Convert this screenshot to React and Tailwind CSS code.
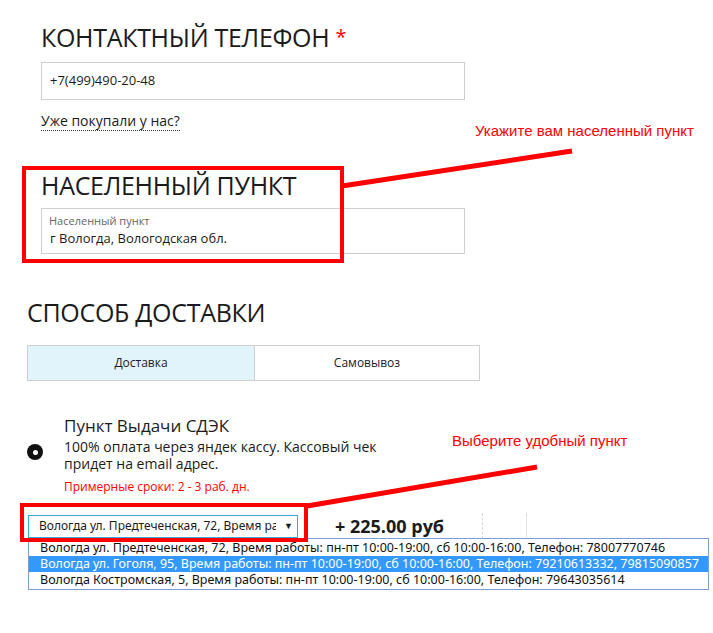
export default function App() {
  const options = [
    "Вологда ул. Предтеченская, 72, Время работы: пн-пт 10:00-19:00, сб 10:00-16:00, Телефон: 78007770746",
    "Вологда ул. Гоголя, 95, Время работы: пн-пт 10:00-19:00, сб 10:00-16:00, Телефон: 79210613332, 79815090857",
    "Вологда Костромская, 5, Время работы: пн-пт 10:00-19:00, сб 10:00-16:00, Телефон: 79643035614",
  ];

  return (
    <div className="relative w-[713px] h-[633px] bg-white overflow-hidden text-[#1b1b1b] font-['Open_Sans',sans-serif]">
      {/* Контактный телефон */}
      <div className="pl-[41px] pt-[21px]">
        <h2 className="text-[25px] leading-[32px] tracking-[-0.3px]">
          КОНТАКТНЫЙ ТЕЛЕФОН <span className="text-[20px] text-[#ff0000] align-top">*</span>
        </h2>
        <div className="mt-[9px] w-[424px] h-[38px] border border-[#cfcfcf] flex items-center px-[8px] text-[13px]">
          +7(499)490-20-48
        </div>
        <div className="mt-[8px]">
          <span className="text-[14px] leading-[20px] border-b border-dotted border-[#333]">Уже покупали у нас?</span>
        </div>
      </div>

      {/* Населенный пункт */}
      <div className="pl-[41px] pt-[37px]">
        <h2 className="text-[25px] leading-[32px] tracking-[-0.3px]">НАСЕЛЕННЫЙ ПУНКТ</h2>
        <div className="mt-[7px] w-[424px] h-[46px] border border-[#cfcfcf] px-[7px] pt-[5px]">
          <div className="text-[11px] leading-[14px] text-[#666]">Населенный пункт</div>
          <div className="text-[13px] leading-[20px] pl-[1px]">г Вологда, Вологодская обл.</div>
        </div>
      </div>

      {/* Способ доставки */}
      <div className="pl-[27px] pt-[42px]">
        <h2 className="text-[25px] leading-[32px] tracking-[-0.3px]">СПОСОБ ДОСТАВКИ</h2>
        <div className="mt-[17px] w-[453px] h-[36px] border border-[#cfcfcf] flex text-[12px]">
          <div className="w-[227px] bg-[#e2f4fb] border-r border-[#cfcfcf] flex items-center justify-center">Доставка</div>
          <div className="flex-1 flex items-center justify-center">Самовывоз</div>
        </div>

        <div className="mt-[34px] flex">
          <div className="w-[37px] pt-[29px]">
            <div className="w-[16px] h-[16px] rounded-full bg-[#111] flex items-center justify-center">
              <div className="w-[5px] h-[5px] rounded-full bg-white" />
            </div>
          </div>
          <div>
            <div className="text-[17px] leading-[22px]">Пункт Выдачи СДЭК</div>
            <div className="text-[14px] leading-[17px] w-[330px] mt-[1px]">100% оплата через яндек кассу. Кассовый чек придет на email адрес.</div>
            <div className="text-[12px] leading-[16px] text-[#ff0000] mt-[7px]">Примерные сроки: 2 - 3 раб. дн.</div>
          </div>
        </div>

        <div className="mt-[18px] flex items-center">
          <div className="relative ml-[1px] w-[270px] h-[23px] border border-[#3ba6dc] flex items-center pl-[10px] pr-[4px] text-[12px]">
            <span className="flex-1 whitespace-nowrap overflow-hidden font-['Noto_Sans',sans-serif]">{options[0]}</span>
            <span className="ml-[8px] text-[9px]">▼</span>
            <div className="absolute left-[-1px] top-[22px] w-[681px] border border-[#7c9ed6] bg-white z-10 py-[1px] font-['Noto_Sans',sans-serif] text-[12.5px] leading-[16px] overflow-hidden">
              {options.map((o, i) => (
                <div key={i} className={`pl-[11px] whitespace-nowrap ${i === 1 ? "bg-[#3399ff] text-white" : "text-[#111]"}`}>
                  {o}
                </div>
              ))}
            </div>
          </div>
          <div className="ml-[37px] text-[18px] font-bold leading-[24px]">+ 225.00 руб</div>
          <div className="ml-[38px] h-[26px] border-l border-dashed border-[#d6d6d6]" />
          <div className="ml-[43px] h-[26px] border-l border-[#e4e4e4]" />
        </div>
      </div>

      {/* аннотации */}
      <div className="absolute left-[475px] top-[120px] text-[15px] text-[#ff0000] font-['Liberation_Sans',sans-serif] whitespace-nowrap">
        Укажите вам населенный пункт
      </div>
      <div className="absolute left-[452px] top-[430px] text-[15px] text-[#ff0000] font-['Liberation_Sans',sans-serif] whitespace-nowrap">
        Выберите удобный пункт
      </div>
      <svg className="absolute left-0 top-0 z-20 pointer-events-none" width="713" height="633">
        <rect x="24" y="168" width="318" height="93" fill="none" stroke="#ff0000" strokeWidth="4" />
        <line x1="342" y1="186" x2="572" y2="151" stroke="#ff0000" strokeWidth="5" />
        <rect x="22" y="505" width="284" height="35" fill="none" stroke="#ff0000" strokeWidth="4" />
        <line x1="307" y1="506" x2="537" y2="467" stroke="#ff0000" strokeWidth="5" />
      </svg>
    </div>
  );
}
